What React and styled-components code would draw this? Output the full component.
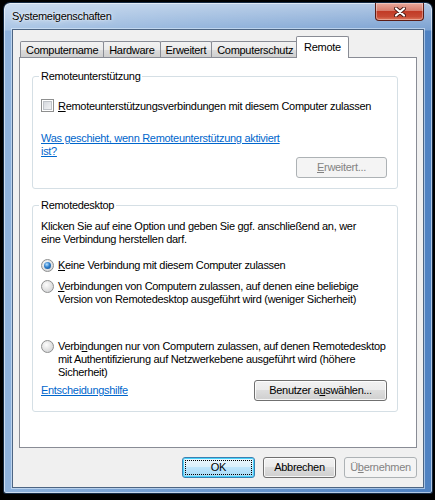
import React from 'react';
import styled, { createGlobalStyle, css } from 'styled-components';

const GlobalStyle = createGlobalStyle`
  html, body {
    margin: 0;
    padding: 0;
    background: #000;
  }
  body {
    font-family: "Liberation Sans", Arial, sans-serif;
    font-size: 11px;
    letter-spacing: -0.3px;
    color: #000;
  }
`;

const Screen = styled.div`
  width: 435px;
  height: 500px;
  box-sizing: border-box;
  padding: 3px 0 0 4px;
  background: #000;
`;

const Window = styled.div`
  width: 428px;
  height: 490px;
  box-sizing: border-box;
  padding: 0 8px 5px 8px;
  display: flex;
  flex-direction: column;
  border-radius: 6px 6px 2px 2px;
  background:
    linear-gradient(180deg, rgba(255, 255, 255, 0.55) 0, rgba(255, 255, 255, 0.25) 27px, rgba(255, 255, 255, 0) 28px),
    linear-gradient(90deg, #8fb3dd 0%, #6f9bd0 45%, #4f82c2 100%);
  box-shadow:
    inset 0 0 0 1px rgba(255, 255, 255, 0.55),
    0 0 0 1px #142a44;
`;

const TitleBar = styled.div`
  height: 27px;
  display: flex;
  justify-content: space-between;
  align-items: flex-start;
`;

const Title = styled.div`
  font-size: 11px;
  line-height: 14px;
  padding-top: 6px;
  color: #000;
  text-shadow: 0 0 6px rgba(255, 255, 255, 0.9), 0 0 2px rgba(255, 255, 255, 0.9);
`;

const CloseButton = styled.div`
  width: 49px;
  height: 18px;
  box-sizing: border-box;
  display: flex;
  align-items: center;
  justify-content: center;
  border: 1px solid #5c1c14;
  border-top: none;
  border-radius: 0 0 4px 4px;
  background: linear-gradient(180deg, #e9a99c 0%, #d77d6d 45%, #c23b26 50%, #c74a34 80%, #e07a5e 100%);
  box-shadow: inset 0 0 0 1px rgba(255, 255, 255, 0.35);
`;

const Client = styled.div`
  flex: 1;
  display: flex;
  flex-direction: column;
  padding: 6px 6px 9px 6px;
  background: #f0f0f0;
  border: 1px solid #4d6583;
  box-shadow: 0 0 0 1px rgba(220, 235, 250, 0.6);
`;

const TabStrip = styled.div`
  display: flex;
  align-items: flex-end;
  height: 22px;
  padding-left: 2px;
  margin-bottom: -1px;
  position: relative;
  z-index: 1;
`;

const Tab = styled.div`
  box-sizing: border-box;
  border: 1px solid #898c95;
  border-bottom: none;
  border-radius: 2px 2px 0 0;
  margin-left: -1px;
  line-height: 14px;
  white-space: nowrap;
  color: #000;
  ${({ $active }) =>
    $active
      ? css`
          height: 22px;
          padding: 3px 7px 0 7px;
          margin: 0 -2px 0 -3px;
          background: #fff;
          position: relative;
          z-index: 2;
        `
      : css`
          height: 16px;
          padding: 1px 5px 0 5px;
          margin-bottom: 1px;
          background: linear-gradient(180deg, #f2f2f2 0%, #ebebeb 50%, #dddddd 51%, #cfcfcf 100%);
        `}
`;

const Panel = styled.div`
  height: 391px;
  box-sizing: border-box;
  padding: 11px 18px 0 12px;
  background: #fff;
  border: 1px solid #898c95;
  display: flex;
  flex-direction: column;
`;

const GroupBox = styled.fieldset`
  margin: ${({ $gap }) => $gap || 0}px 0 0 0;
  padding: 0 10px 10px 8px;
  min-width: 0;
  border: 1px solid #d5dfe5;
  border-radius: 3px;
  display: flex;
  flex-direction: column;
`;

const Legend = styled.legend`
  padding: 0 2px;
  margin-left: -2px;
  line-height: 14px;
  color: #000;
`;

const Row = styled.div`
  display: flex;
  align-items: flex-start;
  gap: 4px;
  margin-top: ${({ $gap }) => $gap || 0}px;
  line-height: 13px;
  white-space: nowrap;
`;

const Text = styled.div`
  line-height: 13px;
  white-space: nowrap;
  margin-top: ${({ $gap }) => $gap || 0}px;
`;

const Link = styled.a`
  display: block;
  color: #0066cc;
  text-decoration: underline;
  line-height: 13px;
  white-space: nowrap;
  margin-top: ${({ $gap }) => $gap || 0}px;
`;

const CheckBox = styled.span`
  flex: none;
  width: 13px;
  height: 13px;
  box-sizing: border-box;
  border: 1px solid #8e8f8f;
  background: linear-gradient(135deg, #cbcfd5 0%, #e6e8eb 55%, #f7f7f7 100%);
  box-shadow: inset 0 0 0 1px #fff, inset 0 0 0 2px #bfc3c8;
  margin-top: -1px;
`;

const Radio = styled.span`
  flex: none;
  width: 13px;
  height: 13px;
  box-sizing: border-box;
  border-radius: 50%;
  border: 1px solid #8e8f8f;
  background: radial-gradient(circle at 40% 35%, #fdfdfd 0%, #e3e3e3 50%, #c9ccd1 100%);
  display: flex;
  align-items: center;
  justify-content: center;
  &::after {
    content: '';
    display: ${({ $checked }) => ($checked ? 'block' : 'none')};
    width: 7px;
    height: 7px;
    border-radius: 50%;
    background: radial-gradient(circle at 40% 35%, #b9e2ff 0%, #2f7fcc 45%, #0f4a8a 100%);
  }
`;

const ButtonRow = styled.div`
  display: flex;
  justify-content: ${({ $between }) => ($between ? 'space-between' : 'flex-end')};
  align-items: center;
  gap: 8px;
  margin-top: ${({ $gap }) => $gap || 0}px;
`;

const Button = styled.div`
  width: ${({ $w }) => $w}px;
  height: 21px;
  box-sizing: border-box;
  display: flex;
  align-items: center;
  justify-content: center;
  border-radius: 3px;
  line-height: 13px;
  white-space: nowrap;
  border: 1px solid #707070;
  color: #000;
  background: linear-gradient(180deg, #f2f2f2 0%, #ebebeb 49%, #dddddd 50%, #cfcfcf 100%);
  box-shadow: inset 0 0 0 1px rgba(255, 255, 255, 0.8);
  ${({ $default }) =>
    $default &&
    css`
      border-color: #3c7fb1;
      background: linear-gradient(180deg, #eaf6fd 0%, #d9f0fc 49%, #bee6fd 50%, #a7d9f5 100%);
      outline: 1px dotted #000;
      outline-offset: -4px;
      box-shadow: inset 0 0 0 1px #48d3fb;
    `}
  ${({ $disabled }) =>
    $disabled &&
    css`
      border-color: #adb2b5;
      color: #838383;
      background: #f4f4f4;
      box-shadow: none;
    `}
`;

const Ul = styled.span`
  text-decoration: underline;
`;

const CloseGlyph = () => (
  <svg width="12" height="10" viewBox="0 0 12 10">
    <path d="M2 1.5 L10 8.5 M10 1.5 L2 8.5" stroke="#4a1a14" strokeWidth="4" strokeLinecap="round" />
    <path d="M2 1.5 L10 8.5 M10 1.5 L2 8.5" stroke="#fff" strokeWidth="2.2" strokeLinecap="round" />
  </svg>
);

const tabs = ['Computername', 'Hardware', 'Erweitert', 'Computerschutz', 'Remote'];

export default function App() {
  return (
    <>
      <GlobalStyle />
      <Screen>
        <Window>
          <TitleBar>
            <Title>Systemeigenschaften</Title>
            <CloseButton>
              <CloseGlyph />
            </CloseButton>
          </TitleBar>
          <Client>
            <TabStrip>
              {tabs.map((t) => (
                <Tab key={t} $active={t === 'Remote'}>
                  {t}
                </Tab>
              ))}
            </TabStrip>
            <Panel>
              <GroupBox>
                <Legend>Remoteunterstützung</Legend>
                <Row $gap={17}>
                  <CheckBox />
                  <span>
                    <Ul>R</Ul>emoteunterstützungsverbindungen mit diesem Computer zulassen
                  </span>
                </Row>
                <Link $gap={19}>
                  Was geschieht, wenn Remoteunterstützung aktiviert
                  <br />
                  ist?
                </Link>
                <ButtonRow $gap={-1}>
                  <Button $w={91} $disabled>
                    <span>
                      <Ul>E</Ul>rweitert...
                    </span>
                  </Button>
                </ButtonRow>
              </GroupBox>

              <GroupBox $gap={9}>
                <Legend>Remotedesktop</Legend>
                <Text $gap={8}>
                  Klicken Sie auf eine Option und geben Sie ggf. anschließend an, wer
                  <br />
                  eine Verbindung herstellen darf.
                </Text>
                <Row $gap={13}>
                  <Radio $checked />
                  <span>
                    <Ul>K</Ul>eine Verbindung mit diesem Computer zulassen
                  </span>
                </Row>
                <Row $gap={8}>
                  <Radio />
                  <span>
                    <Ul>V</Ul>erbindungen von Computern zulassen, auf denen eine beliebige
                    <br />
                    Version von Remotedesktop ausgeführt wird (weniger Sicherheit)
                  </span>
                </Row>
                <Row $gap={34}>
                  <Radio />
                  <span>
                    Verbi<Ul>n</Ul>dungen nur von Computern zulassen, auf denen Remotedesktop
                    <br />
                    mit Authentifizierung auf Netzwerkebene ausgeführt wird (höhere
                    <br />
                    Sicherheit)
                  </span>
                </Row>
                <ButtonRow $between $gap={1}>
                  <Link>Entscheidungshilfe</Link>
                  <Button $w={133}>
                    <span>
                      Benutzer a<Ul>u</Ul>swählen...
                    </span>
                  </Button>
                </ButtonRow>
              </GroupBox>
            </Panel>
            <ButtonRow $gap={9}>
              <Button $w={73} $default>
                OK
              </Button>
              <Button $w={73}>Abbrechen</Button>
              <Button $w={73} $disabled>
                <span>
                  Ü<Ul>b</Ul>ernehmen
                </span>
              </Button>
            </ButtonRow>
          </Client>
        </Window>
      </Screen>
    </>
  );
}
